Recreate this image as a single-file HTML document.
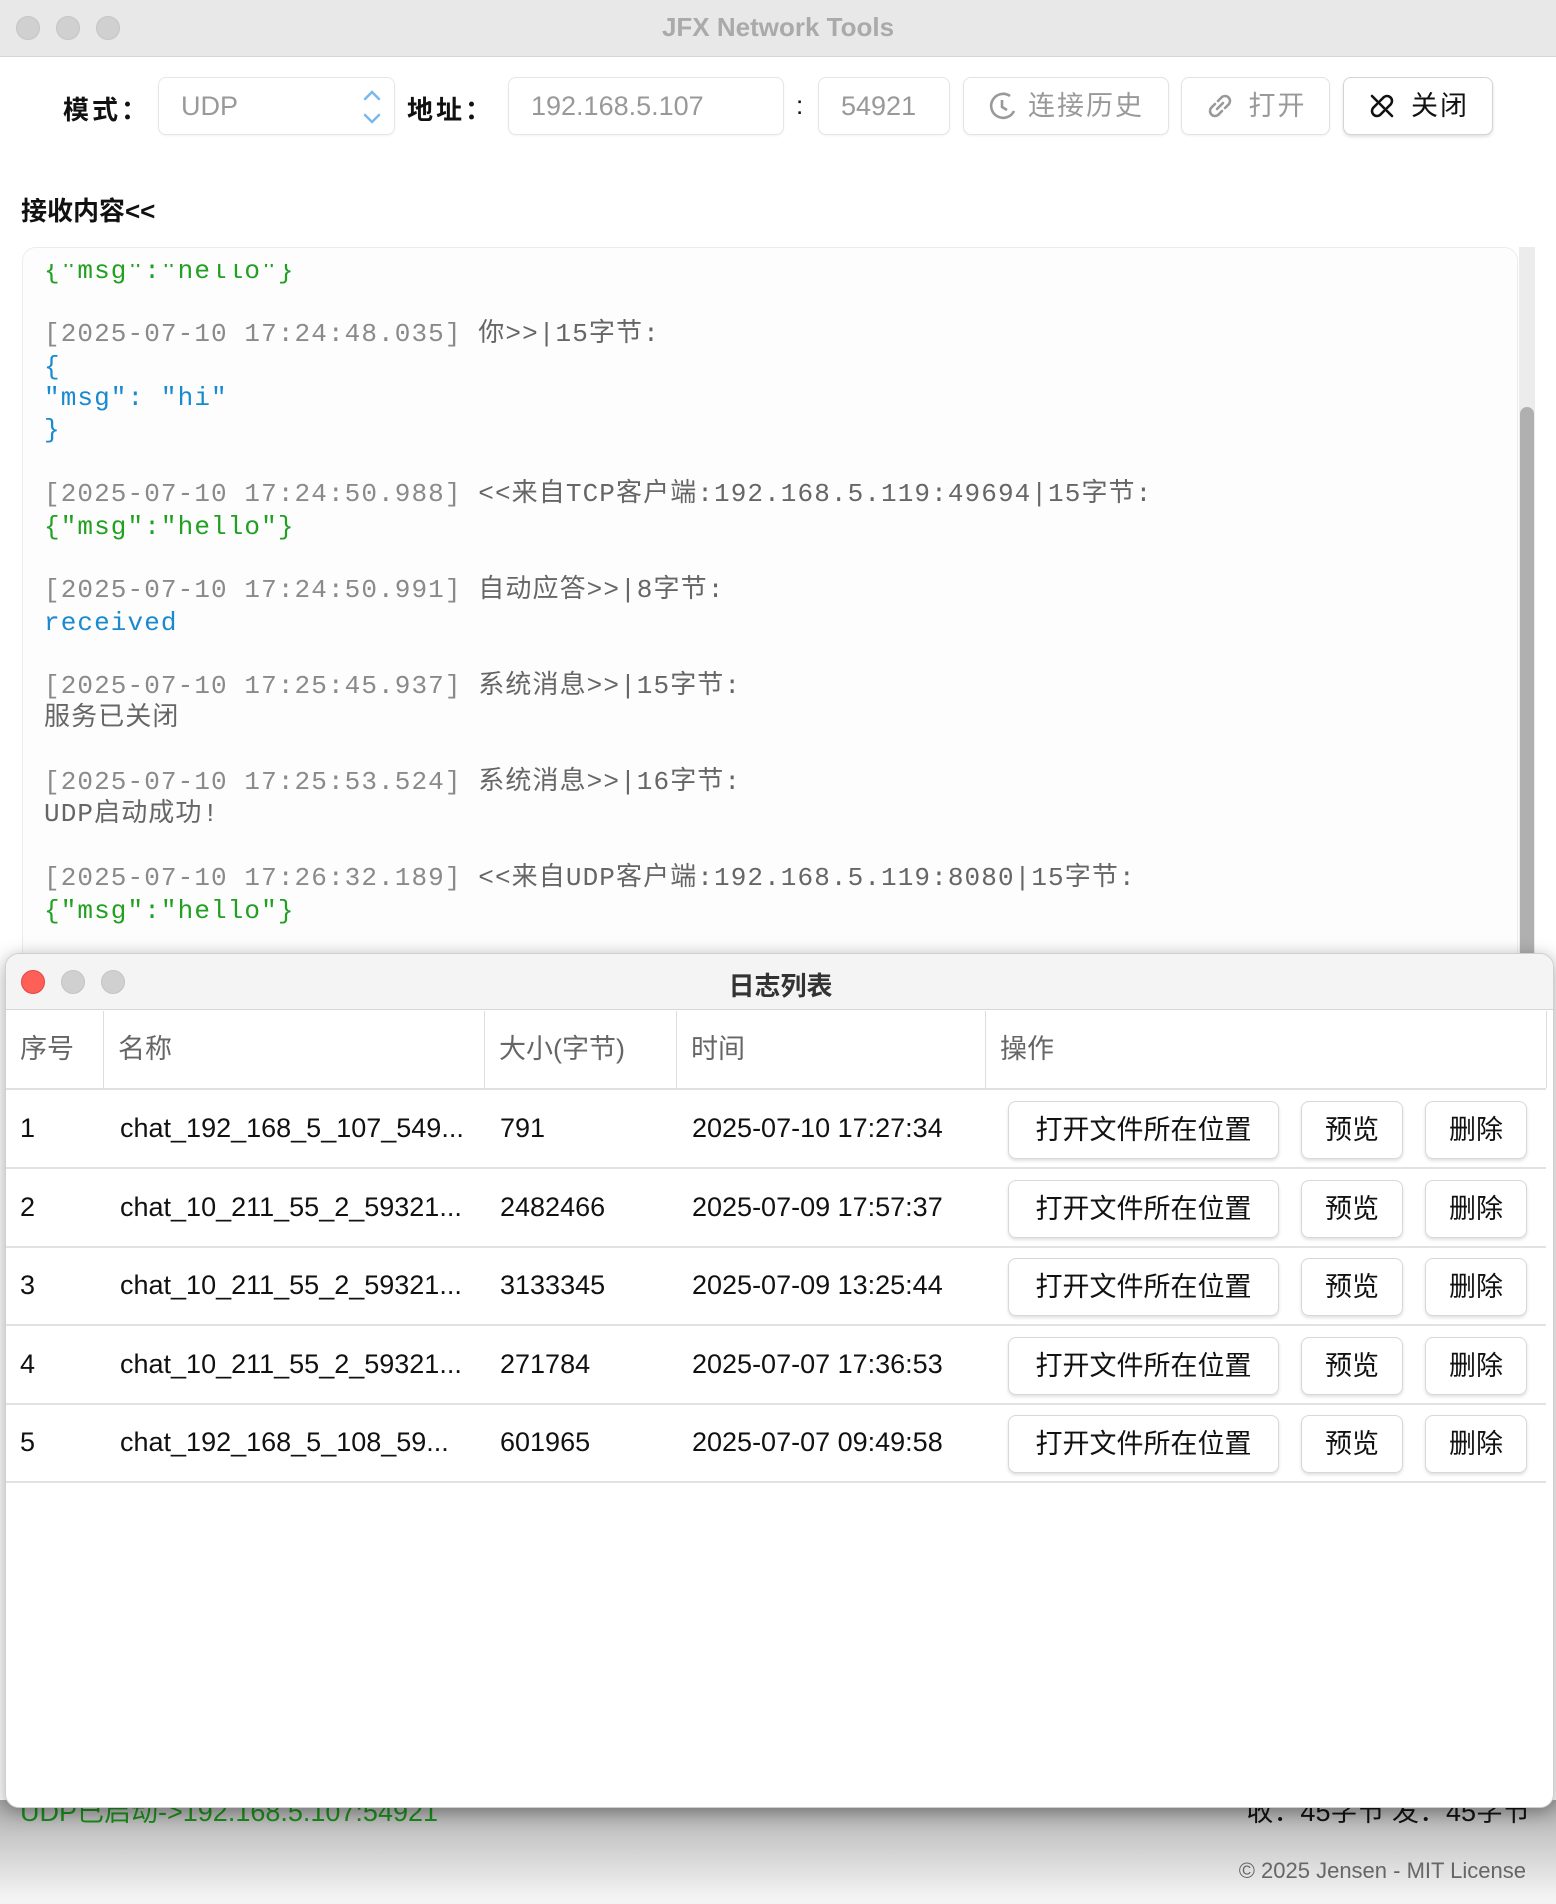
<!DOCTYPE html>
<html><head><meta charset="utf-8">
<style>
*{margin:0;padding:0;box-sizing:border-box}
body{width:1556px;height:1904px;position:relative;overflow:hidden;background:#fff;font-family:"Liberation Sans","Noto Sans CJK SC",sans-serif}
.a{position:absolute}
.tb{left:0;top:0;width:1556px;height:57px;background:#e8e8e8;border-bottom:1px solid #d6d6d6}
.dot{position:absolute;width:24px;height:24px;border-radius:50%;background:#d0d0d0;border:1px solid #c4c4c4}
.fld{position:absolute;top:77px;height:58px;border:1px solid #e6e6e6;border-radius:8px;background:#fff;color:#999;font-size:27px;line-height:56px;padding-left:22px;box-shadow:0 1px 2px rgba(0,0,0,.05)}
.btn{position:absolute;top:77px;height:58px;border:1px solid #e3e3e3;border-radius:8px;background:#fff;color:#999;font-size:27px;line-height:56px;text-align:center;box-shadow:0 1px 2px rgba(0,0,0,.06);letter-spacing:2px}
.lbl{position:absolute;top:90px;font-size:26px;color:#111;font-weight:bold;letter-spacing:3px}
.mono{font-family:"Liberation Mono","Noto Sans CJK SC",monospace;font-size:26px;letter-spacing:1.1px;white-space:pre;position:absolute;left:44px;line-height:32px}
.g{color:#8a8a8a}.d{color:#666}.gr{color:#22a022}.bl{color:#1a8ad0}
.th{position:absolute;top:1011px;height:77px;line-height:77px;font-size:27px;color:#666;padding-left:14px;border-right:1px solid #ddd}
.row{position:absolute;left:6px;width:1540px;height:79px;border-bottom:2px solid #e2e2e2;font-size:27px;color:#111}
.row span{position:absolute;top:0;line-height:77px}
.rb{position:absolute;top:11px;height:58px;border:1px solid #d8d8d8;border-radius:8px;background:#fff;font-size:27px;line-height:56px;text-align:center;color:#111;box-shadow:0 2px 3px rgba(0,0,0,.12)}
</style></head><body>
<div class="a" style="left:0;top:1800px;width:1556px;height:104px;background:linear-gradient(#a8a8a8,#c8c8c8 35%,#f4f4f4 95%)"></div>
<div class="a tb"></div>
<div class="dot" style="left:16px;top:16px"></div>
<div class="dot" style="left:56px;top:16px"></div>
<div class="dot" style="left:96px;top:16px"></div>
<div class="a" style="left:0;width:1556px;top:12px;text-align:center;font-size:26px;font-weight:bold;color:#aaa">JFX Network Tools</div>

<div class="lbl" style="left:63px">模式：</div>
<div class="fld" style="left:158px;width:237px">UDP
<svg class="a" style="left:202px;top:10px" width="22" height="38" viewBox="0 0 22 38"><path d="M4 11 L11 4 L18 11 M4 27 L11 34 L18 27" stroke="#7ab8ee" stroke-width="2.5" fill="none" stroke-linecap="round"/></svg></div>
<div class="lbl" style="left:407px">地址：</div>
<div class="lbl" style="left:796px;font-weight:normal">:</div>
<div class="fld" style="left:508px;width:276px">192.168.5.107</div>
<div class="fld" style="left:818px;width:132px">54921</div>
<div class="btn" style="left:963px;width:206px"><svg style="vertical-align:-6px;margin-right:10px" width="30" height="30" viewBox="0 0 30 30"><path d="M22 5 A12 12 0 1 0 26 20" stroke="#999" stroke-width="2.6" fill="none"/><path d="M14 9 V16 L19 19" stroke="#999" stroke-width="2.6" fill="none"/></svg>连接历史</div>
<div class="btn" style="left:1181px;width:149px"><svg style="vertical-align:-6px;margin-right:14px" width="30" height="30" viewBox="0 0 30 30"><path d="M13 10 L17 6 a5 5 0 0 1 7 7 L20 17 M17 20 L13 24 a5 5 0 0 1 -7 -7 L10 13 M12 18 L18 12" stroke="#999" stroke-width="2.6" fill="none" stroke-linecap="round"/></svg>打开</div>
<div class="btn" style="left:1343px;width:150px;color:#111;border-color:#d4d4d4;box-shadow:0 2px 3px rgba(0,0,0,.12)"><svg style="vertical-align:-6px;margin-right:14px" width="30" height="30" viewBox="0 0 30 30"><path d="M13 10 L17 6 a5 5 0 0 1 7 7 L20 17 M17 20 L13 24 a5 5 0 0 1 -7 -7 L10 13 M5 5 L25 25" stroke="#111" stroke-width="2.6" fill="none" stroke-linecap="round"/></svg>关闭</div>

<div class="a" style="left:21px;top:191px;font-size:26px;color:#111;font-weight:bold">接收内容&lt;&lt;</div>

<div class="a" style="left:22px;top:247px;width:1496px;height:720px;border:1px solid #ececec;border-radius:14px;background:#fdfdfd;overflow:hidden">
<div class="mono gr" style="top:7px;left:21px">{"msg":"hello"}</div>
<div class="a" style="left:0;top:0;width:1496px;height:16px;background:#fdfdfd"></div>
<div class="mono" style="top:70px;left:21px"><span class="g">[2025-07-10 17:24:48.035]</span> <span class="d">你&gt;&gt;|15字节:</span></div>
<div class="mono bl" style="top:103px;left:21px">{</div>
<div class="mono bl" style="top:134px;left:21px">"msg": "hi"</div>
<div class="mono bl" style="top:166px;left:21px">}</div>
<div class="mono" style="top:230px;left:21px"><span class="g">[2025-07-10 17:24:50.988]</span> <span class="d">&lt;&lt;来自TCP客户端:192.168.5.119:49694|15字节:</span></div>
<div class="mono gr" style="top:263px;left:21px">{"msg":"hello"}</div>
<div class="mono" style="top:326px;left:21px"><span class="g">[2025-07-10 17:24:50.991]</span> <span class="d">自动应答&gt;&gt;|8字节:</span></div>
<div class="mono bl" style="top:359px;left:21px">received</div>
<div class="mono" style="top:422px;left:21px"><span class="g">[2025-07-10 17:25:45.937]</span> <span class="d">系统消息&gt;&gt;|15字节:</span></div>
<div class="mono d" style="top:454px;left:21px">服务已关闭</div>
<div class="mono" style="top:518px;left:21px"><span class="g">[2025-07-10 17:25:53.524]</span> <span class="d">系统消息&gt;&gt;|16字节:</span></div>
<div class="mono d" style="top:550px;left:21px">UDP启动成功!</div>
<div class="mono" style="top:614px;left:21px"><span class="g">[2025-07-10 17:26:32.189]</span> <span class="d">&lt;&lt;来自UDP客户端:192.168.5.119:8080|15字节:</span></div>
<div class="mono gr" style="top:647px;left:21px">{"msg":"hello"}</div>
</div>
<div class="a" style="left:1519px;top:247px;width:16px;height:720px;background:#ececec"></div>
<div class="a" style="left:1520px;top:407px;width:14px;height:560px;background:#b0b0b0;border-radius:7px 7px 0 0"></div>

<div class="a" style="left:20px;top:1790px;font-size:27px;color:#1a8a1a">UDP已启动-&gt;192.168.5.107:54921</div>
<div class="a" style="right:26px;top:1790px;font-size:27px;color:#111">收：45字节 发：45字节</div>
<div class="a" style="right:30px;top:1858px;font-size:22px;color:#666">© 2025 Jensen - MIT License</div>

<div class="a" style="left:5px;top:953px;width:1549px;height:855px;background:#fff;border-radius:14px;box-shadow:0 4px 18px rgba(0,0,0,.35);overflow:hidden;border:1px solid #cfcfcf">
<div class="a" style="left:0;top:0;width:1549px;height:56px;background:#f4f4f4;border-bottom:1px solid #d6d6d6"></div>
<div class="dot" style="left:15px;top:16px;background:#fe5f57;border-color:#e2463f"></div>
<div class="dot" style="left:55px;top:16px"></div>
<div class="dot" style="left:95px;top:16px"></div>
<div class="a" style="left:0;width:1549px;top:12px;text-align:center;font-size:26px;font-weight:bold;color:#333">日志列表</div>
</div>
<div class="th" style="left:6px;width:98px">序号</div>
<div class="th" style="left:104px;width:381px">名称</div>
<div class="th" style="left:485px;width:192px">大小(字节)</div>
<div class="th" style="left:677px;width:309px">时间</div>
<div class="th" style="left:986px;width:561px">操作</div>
<div class="a" style="left:6px;top:1088px;width:1540px;height:2px;background:#e0e0e0"></div>

<div class="row" style="top:1090px"><span style="left:14px">1</span><span style="left:114px">chat_192_168_5_107_549...</span><span style="left:494px">791</span><span style="left:686px">2025-07-10 17:27:34</span><div class="rb" style="left:1002px;width:271px">打开文件所在位置</div><div class="rb" style="left:1295px;width:102px">预览</div><div class="rb" style="left:1419px;width:102px">删除</div></div>
<div class="row" style="top:1169px"><span style="left:14px">2</span><span style="left:114px">chat_10_211_55_2_59321...</span><span style="left:494px">2482466</span><span style="left:686px">2025-07-09 17:57:37</span><div class="rb" style="left:1002px;width:271px">打开文件所在位置</div><div class="rb" style="left:1295px;width:102px">预览</div><div class="rb" style="left:1419px;width:102px">删除</div></div>
<div class="row" style="top:1247px"><span style="left:14px">3</span><span style="left:114px">chat_10_211_55_2_59321...</span><span style="left:494px">3133345</span><span style="left:686px">2025-07-09 13:25:44</span><div class="rb" style="left:1002px;width:271px">打开文件所在位置</div><div class="rb" style="left:1295px;width:102px">预览</div><div class="rb" style="left:1419px;width:102px">删除</div></div>
<div class="row" style="top:1326px"><span style="left:14px">4</span><span style="left:114px">chat_10_211_55_2_59321...</span><span style="left:494px">271784</span><span style="left:686px">2025-07-07 17:36:53</span><div class="rb" style="left:1002px;width:271px">打开文件所在位置</div><div class="rb" style="left:1295px;width:102px">预览</div><div class="rb" style="left:1419px;width:102px">删除</div></div>
<div class="row" style="top:1404px"><span style="left:14px">5</span><span style="left:114px">chat_192_168_5_108_59...</span><span style="left:494px">601965</span><span style="left:686px">2025-07-07 09:49:58</span><div class="rb" style="left:1002px;width:271px">打开文件所在位置</div><div class="rb" style="left:1295px;width:102px">预览</div><div class="rb" style="left:1419px;width:102px">删除</div></div>
</body></html>
